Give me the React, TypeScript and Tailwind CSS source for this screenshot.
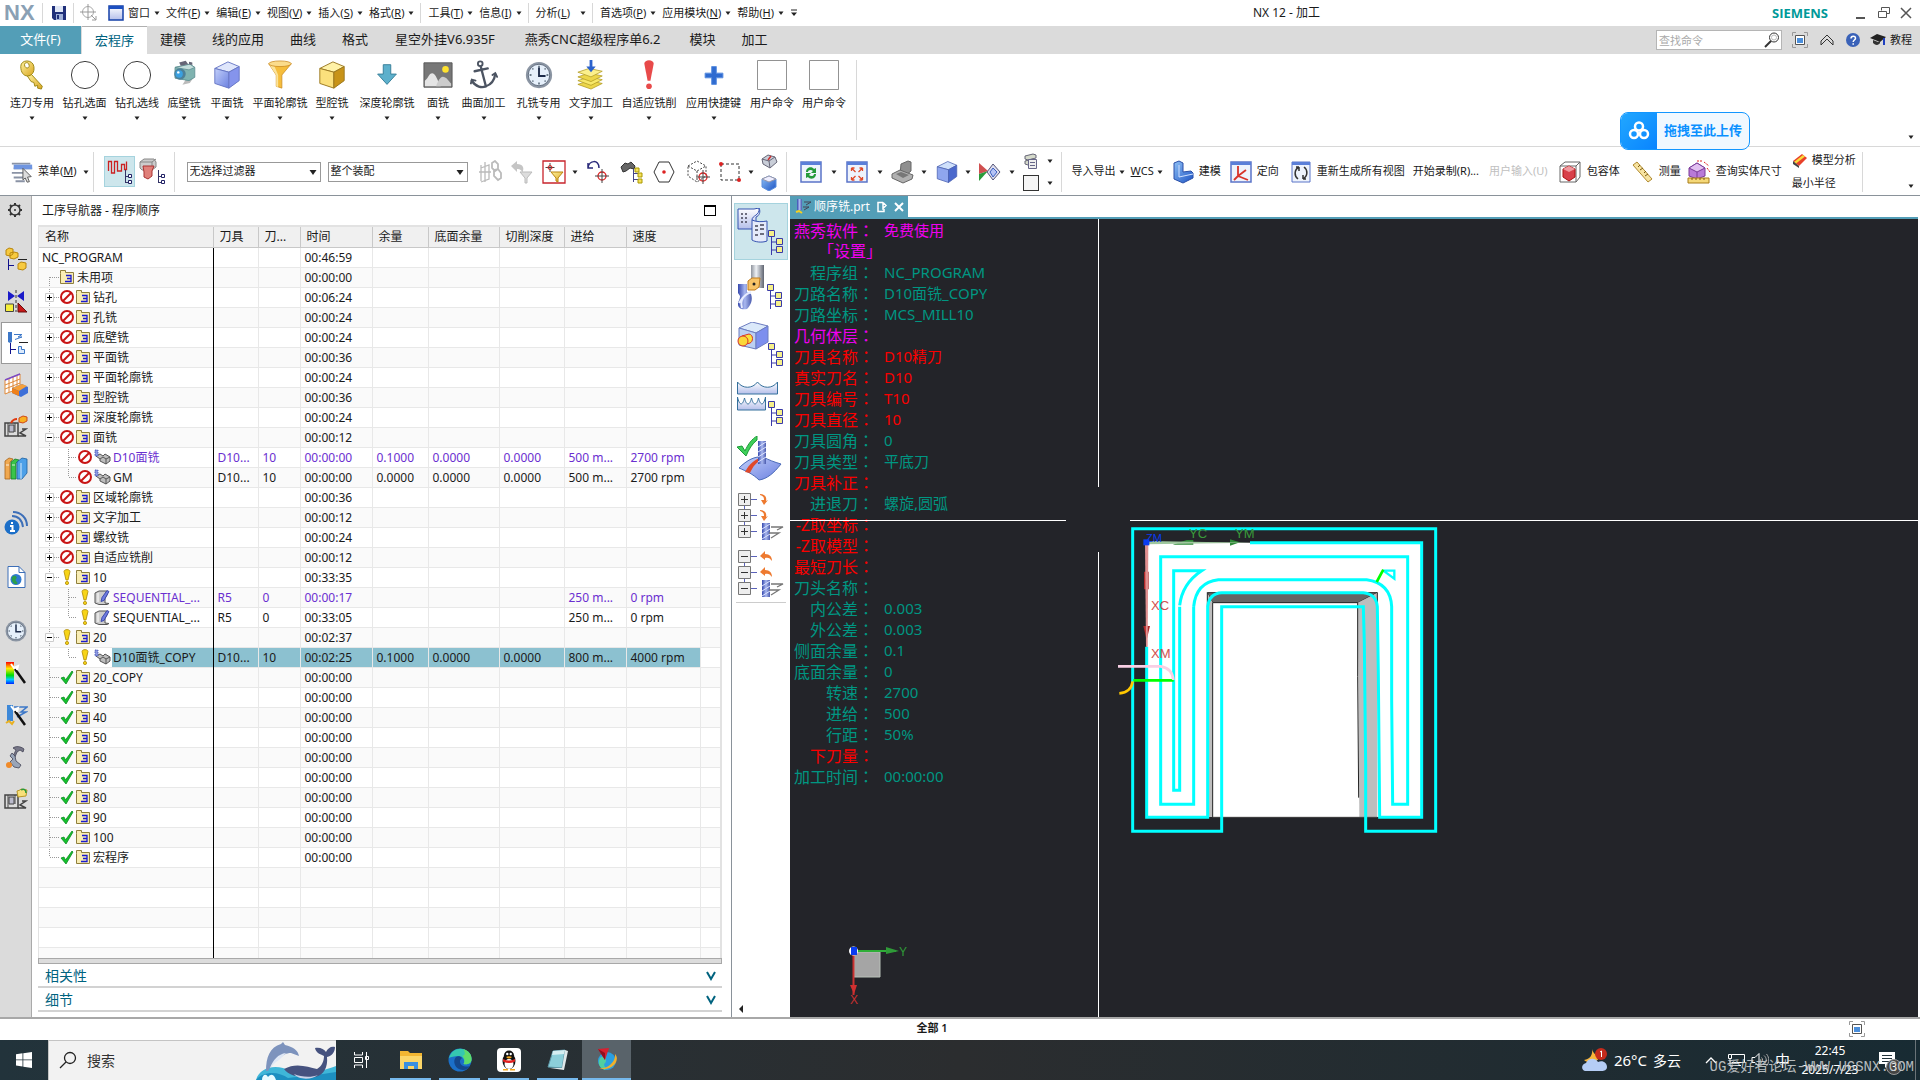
import { ReactNode } from 'react';

const FONT = "font-['Noto_Sans','Noto_Sans_CJK_SC',sans-serif]";

/* ---------- shared bits ---------- */

function Ico({ box = '0 0 24 24', className, children }: { box?: string; className: string; children: ReactNode }) {
  return (
    <svg viewBox={box} className={`shrink-0 ${className}`} fill="none" aria-hidden="true">
      {children}
    </svg>
  );
}

const Caret = ({ className = '' }: { className?: string }) => (
  <Ico box="0 0 6 4" className={`w-1.5 h-1 ${className}`}>
    <path d="M0.5 0.5h5L3 4z" fill="#222" />
  </Ico>
);

const Sep = ({ className }: { className: string }) => <span className={`w-px shrink-0 bg-[#d8d8d8] ${className}`} />;

// Gradients used by all icons on the page
const Gradients = () => (
  <svg className="absolute w-0 h-0" aria-hidden="true">
    <defs>
      <linearGradient id="gold" x1="0" y1="0" x2="1" y2="1">
        <stop offset="0" stopColor="#fff3a0" />
        <stop offset="1" stopColor="#d9a520" />
      </linearGradient>
      <linearGradient id="blue" x1="0" y1="0" x2="1" y2="1">
        <stop offset="0" stopColor="#c3d0fa" />
        <stop offset="1" stopColor="#6b80e0" />
      </linearGradient>
      <linearGradient id="deep" x1="0" y1="0" x2="1" y2="1">
        <stop offset="0" stopColor="#8ec0f5" />
        <stop offset="1" stopColor="#1c53c4" />
      </linearGradient>
      <linearGradient id="steel" x1="0" y1="0" x2="1" y2="0">
        <stop offset="0" stopColor="#8e939c" />
        <stop offset="0.4" stopColor="#eef1f5" />
        <stop offset="1" stopColor="#5f6470" />
      </linearGradient>
      <linearGradient id="cut" x1="0" y1="0" x2="1" y2="0">
        <stop offset="0" stopColor="#3548ae" />
        <stop offset="0.5" stopColor="#a9b8ef" />
        <stop offset="1" stopColor="#4a5aae" />
      </linearGradient>
      <linearGradient id="rainbow" x1="0" y1="0" x2="0" y2="1">
        <stop offset="0" stopColor="#f00" />
        <stop offset="0.3" stopColor="#fe0" />
        <stop offset="0.6" stopColor="#0d0" />
        <stop offset="0.8" stopColor="#0cf" />
        <stop offset="1" stopColor="#02f" />
      </linearGradient>
      <linearGradient id="panel" x1="0" y1="0" x2="0" y2="1">
        <stop offset="0" stopColor="#fff" />
        <stop offset="1" stopColor="#b5bfea" />
      </linearGradient>
    </defs>
  </svg>
);

const Cube = ({ top, left, right, line }: { top: string; left: string; right: string; line: string }) => (
  <g stroke={line} strokeWidth="1" strokeLinejoin="round">
    <path d="M3 9 17 2l12 5-11 6z" fill={top} />
    <path d="M3 9l15 4v17L3 25z" fill={left} />
    <path d="M29 7 18 13v17l11-8z" fill={right} />
  </g>
);

const Clock = () => (
  <g>
    <circle cx="16" cy="16" r="14" fill="#8b95a3" />
    <circle cx="16" cy="16" r="11.5" fill="#e6f0fb" stroke="#5f6b7c" />
    <path d="M16 6v2M16 24v2M6 16h2M24 16h2M9 9l1 1M23 9l-1 1M9 23l1-1M23 23l-1-1" stroke="#456" strokeWidth="1.5" />
    <path d="M16 8v9h7" stroke="#1d2b4a" strokeWidth="2" />
  </g>
);

/* ---------- title / menu bar ---------- */

const menuGroups: [string, string][][] = [
  [['窗口', ''], ['文件', 'F'], ['编辑', 'E'], ['视图', 'V'], ['插入', 'S'], ['格式', 'R']],
  [['工具', 'T'], ['信息', 'I']],
  [['分析', 'L']],
  [['首选项', 'P'], ['应用模块', 'N'], ['帮助', 'H']],
];

function Mnemonic({ text, letter }: { text: string; letter: string }) {
  return (
    <span>
      {text}
      {letter && <>(<u>{letter}</u>)</>}
    </span>
  );
}

function TitleBar() {
  return (
    <header className="flex items-center h-[26px] bg-white text-[11px] whitespace-nowrap relative">
      <span className="pl-1 w-[42px] text-[22px] leading-none font-bold text-[#8aa0b4] font-['Liberation_Sans',sans-serif]">NX</span>
      <Sep className="h-5" />
      <button className="ml-2 w-4" aria-label="保存">
        <Ico box="0 0 16 16" className="size-4">
          <path d="M1 1h14v14H3l-2-2z" fill="#20307a" />
          <path d="M4 1h8v6H4z" fill="#dfe6f5" />
          <path d="M5 9h7v6H5z" fill="#9fb0d8" />
          <path d="M6 10h2v4H6z" fill="#20307a" />
        </Ico>
      </button>
      <Sep className="h-5 ml-1.5" />
      <Ico box="0 0 18 18" className="size-[18px] ml-1.5">
        <circle cx="8" cy="8" r="5.500" stroke="#aaa" />
        <path d="M8 0v16M0 8h16M11 11l5 5M16 12v4h-4" stroke="#999" />
      </Ico>
      <Ico box="0 0 16 16" className="size-4 ml-2.5 mr-1">
        <path d="M1 1h14v14H1z" fill="url(#panel)" stroke="#1440a8" strokeWidth="1.500" />
        <path d="M1 1h14v3H1z" fill="#1c4fc0" />
      </Ico>
      {menuGroups.map((items, g) => (
        <div key={g} className="flex items-center">
          {g > 0 && <Sep className="h-5 mr-[7px]" />}
          {items.map(([text, letter]) => (
            <button key={text} className="flex items-center gap-1 pr-1.5">
              <Mnemonic text={text} letter={letter} />
              <Caret className={text === '分析' ? 'ml-1.5' : ''} />
            </button>
          ))}
        </div>
      ))}
      <Ico box="0 0 8 8" className="size-2">
        <path d="M1 1h6" stroke="#222" />
        <path d="M1 3.500h6L4 7z" fill="#222" />
      </Ico>
      <h1 className="ml-auto mr-[600px] text-[12px]">NX 12 - 加工</h1>
      <div className="absolute right-0 inset-y-0 flex items-center pr-2">
        <span className="mr-7 pt-0.5 font-bold text-[13px] text-[#009999] font-['Open_Sans',sans-serif]">SIEMENS</span>
        <button aria-label="最小化" className="mr-3">
          <Ico box="0 0 10 12" className="w-2.5 h-3"><path d="M0 11h9" stroke="#555" strokeWidth="2" /></Ico>
        </button>
        <button aria-label="还原" className="mr-2.5">
          <Ico box="0 0 12 12" className="size-3"><path d="M3.500 3.500v-3h8v6h-3M.5 4.500h8v6h-8z" stroke="#555" /></Ico>
        </button>
        <button aria-label="关闭">
          <Ico box="0 0 12 12" className="size-3"><path d="M1 1l10 10M11 1 1 11" stroke="#555" strokeWidth="1.500" /></Ico>
        </button>
      </div>
    </header>
  );
}

/* ---------- ribbon tabs ---------- */

const tabs: [string, string][] = [
  ['建模', 'px-[13px]'],
  ['线的应用', 'px-[13px]'],
  ['曲线', 'px-[13px]'],
  ['格式', 'px-[13px]'],
  ['星空外挂V6.935F', 'px-3.5'],
  ['燕秀CNC超级程序单6.2', 'px-4'],
  ['模块', 'px-[13px]'],
  ['加工', 'px-[13px]'],
];

const FullScreenIcon = ({ className }: { className: string }) => (
  <Ico box="0 0 16 16" className={className}>
    <path d="M.5 4V.5H4M12 .5h3.500V4M15.500 12v3.500H12M4 15.500H.5V12" stroke="#999" />
    <path d="M3.500 3.500h9v9h-9z" fill="#fff" stroke="#555" />
    <path d="M5 6h6v5H5z" fill="#4b8fdc" />
  </Ico>
);

function TabStrip() {
  return (
    <nav className="flex items-stretch h-7 bg-[#dbdbdb] text-[13px] whitespace-nowrap">
      <button className="w-[81px] bg-[#539eb7] text-white text-[13px]">文件(F)</button>
      <button className="px-[13px] ml-px bg-white border-t border-[#b0b0b0] text-[#00637f]">宏程序</button>
      {tabs.map(([label, pad]) => (
        <button key={label} className={pad}>{label}</button>
      ))}
      <div className="ml-auto flex items-center pr-2 text-[11px]">
        <div className="relative w-[126px] h-5">
          <input aria-label="查找命令" placeholder="查找命令" className="w-full h-full bg-white border border-[#b5b5b5] px-0.5 placeholder:text-[#aaa]" />
          <Ico box="0 0 16 16" className="size-4 absolute right-0.5 top-0.5">
            <circle cx="10" cy="5.500" r="4.500" stroke="#333" />
            <circle cx="10" cy="5.500" r="2.500" stroke="#bbb" />
            <path d="M7 9l-6 6" stroke="#333" strokeWidth="2" />
          </Ico>
        </div>
        <FullScreenIcon className="size-4 ml-2.5" />
        <Ico box="0 0 14 12" className="w-3.5 h-3 ml-3">
          <path d="M1 7l6-6 6 6M1 11l6-6 6 6M1 7v4M13 7v4" stroke="#333" />
        </Ico>
        <Ico box="0 0 14 14" className="size-3.5 ml-3">
          <circle cx="7" cy="7" r="7" fill="#3a62b8" />
          <path d="M5 5.500c0-3 4.500-3 4.500-.3C9.500 7 7.200 7 7.200 9M7.200 10.200v1.600" stroke="#fff" strokeWidth="1.500" />
        </Ico>
        <Ico box="0 0 16 12" className="w-4 h-3 ml-2.5">
          <path d="M0 4l7-4 9 3-6 5z" fill="#222" />
          <path d="M3 6v3c3 3 6 2 7 0V7L8 8z" fill="#333" />
          <path d="M14 4v7" stroke="#2040c0" strokeWidth="2" />
        </Ico>
        <span className="ml-1">教程</span>
      </div>
    </nav>
  );
}

/* ---------- ribbon ---------- */

const CircleIcon = <circle cx="16" cy="16" r="14.500" stroke="#333" />;
const BoxIcon = <path d="M.5 .5h31v31H.5z" stroke="#888" />;

const ribbon: { label: string; w: string; caret: boolean; icon: ReactNode }[] = [
  {
    label: '连刀专用', w: 'w-[52px]', caret: true,
    icon: (
      <g fill="url(#gold)" stroke="#9a8410" strokeWidth="1">
        <path d="M15 15l12 13-1 3-4-1v-3l-3 1-1-4-3-1-4-6z" />
        <path d="M4 7c0-8 13-8 14 0 1 7-3 10-7 10S4 13 4 7zm4-2c0 4 5 5 5 1s-5-4-5-1z" fillRule="evenodd" />
      </g>
    ),
  },
  { label: '钻孔选面', w: 'w-[53px]', caret: true, icon: CircleIcon },
  { label: '钻孔选线', w: 'w-[52px]', caret: true, icon: CircleIcon },
  {
    label: '底壁铣', w: 'w-[42px]', caret: true,
    icon: (
      <g transform="translate(2 0) scale(.88)">
        <path d="M14 30l9-2 6-9-10 3z" fill="#bbb" />
        <path d="M5 9l18-4 6 4v12l-7 4-17-3z" fill="#7fb3b0" stroke="#5e8f92" />
        <path d="M5 9l18-4 6 4-7 3z" fill="#c4dedc" stroke="#5e8f92" />
        <path d="M10 3l8-2 3 4-9 2zM22 2l4 1v3l-4-1z" fill="#667" />
        <circle cx="11" cy="17" r="7" fill="#4d8098" />
        <circle cx="10" cy="17" r="4.500" fill="#3aa0e0" />
        <circle cx="9" cy="15" r="1.500" fill="#fff" />
      </g>
    ),
  },
  { label: '平面铣', w: 'w-[44px]', caret: true, icon: <Cube top="#dfe6fb" left="url(#blue)" right="#8594ec" line="#6676c4" /> },
  {
    label: '平面轮廓铣', w: 'w-[62px]', caret: true,
    icon: (
      <g stroke="#c98a20" strokeWidth=".8">
        <path d="M4 4l8 12v12l6 2V16L28 4z" fill="#f5bd3c" />
        <path d="M4 4l8 12v12l2 1V16L9 4z" fill="#fbe39a" stroke="none" />
        <ellipse cx="16" cy="4" rx="12" ry="3" fill="#fbdc8c" />
      </g>
    ),
  },
  { label: '型腔铣', w: 'w-[42px]', caret: true, icon: <Cube top="#fff2a8" left="#fbe07c" right="#c89318" line="#9a7720" /> },
  {
    label: '深度轮廓铣', w: 'w-[68px]', caret: true,
    icon: <path d="M12 5h8v10h6L16 26 6 15h6z" fill="#5db0cc" stroke="#357e98" />,
  },
  {
    label: '面铣', w: 'w-[34px]', caret: true,
    icon: (
      <g>
        <path d="M1 3h30v26H1z" fill="#777" stroke="#555" />
        <path d="M2 22c4-3 4-8 8-8 4 1 5 7 9 14H2z" fill="#e5e5e5" />
        <path d="M14 28c2-6 5-11 8-10 3 0 5 4 8 7v3z" fill="#ccc" />
        <circle cx="24" cy="10" r="3.500" fill="#ffe22e" />
      </g>
    ),
  },
  {
    label: '曲面加工', w: 'w-[57px]', caret: true,
    icon: (
      <g stroke="#4c5462" strokeWidth="2.500" strokeLinecap="round">
        <circle cx="12" cy="4" r="2.500" strokeWidth="2" />
        <path d="M12.500 7 18 28M6 12l14-3" />
        <path d="M3 22c4 7 11 8 15 6 6-2 9-6 10-13" />
        <path d="M2 25l1-4 4 1M25 16l3-2 2 4" strokeWidth="2" />
      </g>
    ),
  },
  { label: '孔铣专用', w: 'w-[53px]', caret: true, icon: <Clock /> },
  {
    label: '文字加工', w: 'w-[52px]', caret: true,
    icon: (
      <g stroke="#b09a20" strokeWidth=".8">
        <path d="M2 26l12-4 14 3-12 6z" fill="#ecd64a" />
        <path d="M2 22l12-4 14 3-12 6z" fill="#f7e86a" />
        <path d="M2 18l12-4 14 3-12 6z" fill="#ecd64a" />
        <path d="M2 13l12-4 14 3-12 6z" fill="#fbf08c" />
        <path d="M14.500 0h3v7h3.500l-5 6-5-6h3.500z" fill="#2c62cc" stroke="none" />
      </g>
    ),
  },
  {
    label: '自适应铣削', w: 'w-[64px]', caret: true,
    icon: (
      <g fill="#e84a4a">
        <path d="M11 4c0-5 10-5 10 0l-3.500 18h-3z" />
        <circle cx="16" cy="28" r="3" />
      </g>
    ),
  },
  { label: '应用快捷键', w: 'w-[65px]', caret: true, icon: <path d="M13.500 7h5v7h7v5h-7v7h-5v-7h-7v-5h7z" fill="#2f6bd0" stroke="#5a8ee0" /> },
  { label: '用户命令', w: 'w-[52px]', caret: false, icon: BoxIcon },
  { label: '用户命令', w: 'w-[52px]', caret: false, icon: BoxIcon },
];

function Ribbon() {
  return (
    <section className="relative flex h-[93px] bg-white border-b border-[#d8d8d8] text-[11px] whitespace-nowrap pl-1.5">
      {ribbon.map((b, i) => (
        <button key={i} className={`flex flex-col items-center pt-1.5 shrink-0 ${b.w}`}>
          <Ico box="0 0 32 32" className="size-[30px]">{b.icon}</Ico>
          <span className="mt-1 h-[18px] leading-[18px]">{b.label}</span>
          {b.caret && <Caret className="mt-1" />}
        </button>
      ))}
      <Sep className="my-1.5 ml-1.5" />
      <Caret className="ml-auto mr-1.5 mt-[81px]" />
      <button className="absolute right-[170px] top-[58px] flex items-center h-[38px] w-[130px] rounded-lg border border-[#1296ff] bg-[#f0f8ff] overflow-hidden z-10">
        <span className="grid place-items-center w-9 h-full bg-gradient-to-br from-[#22a7ff] to-[#0a84ff]">
          <Ico className="size-6">
            <g stroke="#fff" strokeWidth="2.500">
              <circle cx="12" cy="7.500" r="4" />
              <circle cx="7" cy="15" r="4" />
              <circle cx="17" cy="15" r="4" />
            </g>
          </Ico>
        </span>
        <span className="flex-1 text-center text-[13px] font-bold text-[#0a90ff]">拖拽至此上传</span>
      </button>
    </section>
  );
}

/* ---------- selection toolbar ---------- */

const FilterSelect = ({ label, w }: { label: string; w: string }) => (
  <div className={`relative shrink-0 ${w}`}>
    <select aria-label={label} className="w-full h-5 appearance-none border border-[#999] bg-white pl-0.5 text-[11px]">
      <option>{label}</option>
    </select>
    <Ico box="0 0 8 5" className="w-2 h-[5px] absolute right-1 top-2"><path d="M.5 0h7L4 5z" fill="#222" /></Ico>
  </div>
);

const Target = ({ x, y }: { x: number; y: number }) => (
  <g stroke="#d22">
    <circle cx={x} cy={y} r="4" strokeWidth="1.300" />
    <path d={`M${x - 7} ${y}h14M${x} ${y - 7}v14`} stroke="#444" />
  </g>
);

const FrameBox = () => (
  <>
    <path d="M2 2h20v20H2z" fill="#eef3fc" stroke="#5b74c8" strokeWidth="1.500" />
    <path d="M2 2h20v3H2z" fill="#5b7fd8" />
  </>
);

const SmallTree = () => (
  <g>
    <path d="M20.500 12v13M20 18.500h4M20 24.500h4" stroke="#336" />
    <path d="M23.500 16.500h3v3h-3zM23.500 22.500h3v3h-3z" fill="#fff" stroke="#226" />
  </g>
);

function Toolbar() {
  return (
    <section className="flex items-center h-12 pt-px bg-white text-[11px] whitespace-nowrap">
      <button className="flex items-center pl-2.5">
        <Ico box="0 0 26 24" className="w-6 h-6">
          <path d="M2 3h20M4 8h20M2 13h16M4 18h14M6 22h10" stroke="#8a93a5" strokeWidth="2" />
          <path d="M4 4h20v5H4z" fill="#6f95e0" />
          <path d="M14 8l9 9-4 .5 2 5-2.500.5-2-4.500-2.500 2z" fill="#ddd" stroke="#555" />
        </Ico>
        <span className="ml-1 mr-1.5"><Mnemonic text="菜单" letter="M" /></span>
        <Caret />
      </button>
      <Sep className="h-10 ml-1" />
      <button className="ml-2.5 grid place-items-center w-[31px] h-[31px] bg-[#cde6ec] border border-[#a5d3de]" aria-label="刀轨">
        <Ico box="0 0 28 28" className="size-7">
          <path d="M3.500 13V3.500h3V15h3V3.500h3V13h4V6.500h3v5h2v-8" stroke="#c22" strokeWidth="1.300" />
          <SmallTree />
        </Ico>
      </button>
      <Ico box="0 0 28 28" className="size-7 ml-[3px]">
        <path d="M2 4l4-3h10l2 3v5l-4 3H4l-2-2z" fill="#ccc" stroke="#888" />
        <path d="M2 4h12l4-3M14 4v8" stroke="#888" />
        <path d="M5 8h11l-2 5v5l-4 3-4-2v-5z" fill="#e0807a" stroke="#a33" />
        <SmallTree />
      </Ico>
      <Sep className="h-10 ml-2 mr-3" />
      <FilterSelect label="无选择过滤器" w="w-[134px]" />
      <span className="w-[7px]" />
      <FilterSelect label="整个装配" w="w-[140px]" />

      <Ico className="size-6 ml-2.5">
        <path d="M3 5v16M3 8l8-3v14l-8 3M7 2v20M1 12h12" stroke="#bbb" strokeWidth="1.300" />
        <path d="M14 3l3-2 3 3v5l-3 2-3-3zM16 10l4-1 3 4v5l-3 2-4-4z" stroke="#bbb" strokeWidth="1.800" />
      </Ico>
      <Ico className="size-6 ml-2">
        <path d="M1 6l6-5v3c6 0 8 4 5 9 0-3-2-4-5-4v3z" fill="#c5c5c5" />
        <path d="M10 12h12l-5 6v5h-2v-5z" fill="#ddd" stroke="#bbb" />
      </Ico>
      <Ico className="size-6 ml-2">
        <path d="M1 1h22v22H1z" stroke="#c8242c" strokeWidth="1.300" />
        <path d="M8 3v9M3.500 7.500h9" stroke="#444" />
        <circle cx="8" cy="7.500" r="2" stroke="#d22" />
        <path d="M9 12h12l-5 6v4l-2-1v-3z" fill="url(#gold)" stroke="#b98511" />
      </Ico>
      <Caret className="ml-1.5" />
      <Ico className="size-6 ml-2">
        <path d="M2 3v5h5M2 8c1-8 11-9 11 0" stroke="#2a2a7a" strokeWidth="1.500" />
        <Target x={16} y={16} />
      </Ico>
      <Ico className="size-6 ml-2.5">
        <path d="M1 7l4-4 3 1 3-2 4 4-1 3-4-1-4 3-3 1z" fill="#666" stroke="#333" />
        <path d="M13.500 9v13M13 13.500h5M13 19.500h5" stroke="#448" />
        <path d="M15 8h4v4h-4zM18 13h4v4h-4zM18 19h4v4h-4z" fill="#f5e05a" stroke="#a90" />
      </Ico>
      <Ico className="size-6 ml-2">
        <path d="M7 2h10l5 10-5 10H7L2 12z" stroke="#333" />
        <circle cx="12" cy="12" r="1.800" fill="#d22" />
      </Ico>
      <Ico className="size-6 ml-2.5">
        <path d="M2 6l9-5 9 5v10l-9 6-9-6zM2 6l9 5 9-5M11 11v11" stroke="#444" strokeDasharray="2 1.500" />
        <Target x={17} y={17} />
      </Ico>
      <Ico className="size-6 ml-2">
        <path d="M3 4h18v16H3z" stroke="#333" strokeDasharray="3 2" />
        <circle cx="3" cy="4" r="2" fill="#d22" />
        <circle cx="21" cy="20" r="2" fill="#d22" />
      </Ico>
      <Caret className="ml-1.5" />
      <div className="flex flex-col gap-1.5 ml-1.5">
        <Ico box="0 0 18 16" className="w-[18px] h-4">
          <path d="M2 6l6-4 7 2 2 5-7 6-7-4z" fill="#c9ced8" stroke="#667" />
          <path d="M2 6l7 2 6-4M9 8l1 7" stroke="#667" />
          <path d="M8 7l3-4" stroke="#c33" strokeWidth="1.500" />
        </Ico>
        <Ico box="0 0 18 16" className="w-[18px] h-4">
          <path d="M2 4l7-3 7 3v8l-7 4-7-4z" fill="url(#deep)" stroke="#5b8edc" />
          <path d="M2 4l7-3 7 3-7 3z" fill="#eef" stroke="#99a" />
        </Ico>
      </div>
      <Sep className="h-10 ml-2 mr-3" />

      <Ico className="size-6">
        <FrameBox />
        <path d="M7 12c0-5 6-6 8-3l2-1v5h-5l2-2c-2-2-5-1-5 1zM17 14c0 5-6 6-8 3l-2 1v-5h5l-2 2c2 2 5 1 5-1z" fill="#249a3a" />
      </Ico>
      <Caret className="ml-2" />
      <Ico className="size-6 ml-2">
        <FrameBox />
        <path d="M6.500 8h3M6.500 8v3M6.500 8l4 4M17.500 8h-3M17.500 8v3M17.500 8l-4 4M6.500 20h3M6.500 20v-3M6.500 20l4-4M17.500 20h-3M17.500 20v-3M17.500 20l-4-4" stroke="#e04a2a" strokeWidth="1.300" />
      </Ico>
      <Caret className="ml-2" />
      <Ico className="size-6 ml-2">
        <path d="M10 4l7-3 3 1v9l-6 5-5-1z" fill="#8f8f8f" stroke="#666" />
        <path d="M1 14l8-4 13 5-1 4-9 4-11-5z" fill="#b0b0b0" stroke="#666" />
        <path d="M5 14l5-2 8 3-6 3z" fill="#777" />
      </Ico>
      <Caret className="ml-1.5" />
      <Ico box="0 0 32 32" className="size-6 ml-2"><Cube top="#cfe0fb" left="#8fa6ee" right="#4a68cc" line="#4a60b0" /></Ico>
      <Caret className="ml-1.5" />
      <Ico className="size-6 ml-1.5">
        <path d="M2 3l9 8-9 3z" fill="#d05050" />
        <path d="M2 14l9-3-9 10z" fill="#2a9a3a" />
        <path d="M16 4l7 8-7 8-6-8z" fill="#dde" stroke="#557" />
        <path d="M16 8l4 4-4 5-3-5z" fill="#b5c3f5" stroke="#3a5fc0" />
      </Ico>
      <Caret className="ml-2" />
      <div className="flex flex-col gap-1.5 ml-2">
        <div className="flex items-center gap-2">
          <Ico box="0 0 16 16" className="size-4">
            <path d="M2 3l8-2 3 1v3l-8 2-3-1zM2 8l8-2 3 1v3l-8 2-3-1z" fill="#d5dacb" stroke="#667" />
            <path d="M5.500 6.500h8v9h-8z" fill="#eee" stroke="#668" />
            <path d="M7 9.500h5M7 12.500h5" stroke="#668" />
          </Ico>
          <Caret />
        </div>
        <div className="flex items-center gap-2">
          <span className="w-4 h-4 border border-[#333] bg-[#f5f5f5]" />
          <Caret />
        </div>
      </div>
      <Sep className="h-10 ml-2 mr-2.5" />

      <button className="flex items-center gap-[3px]">导入导出<Caret /></button>
      <button className="flex items-center gap-[3px] ml-1.5"><span><u>W</u>CS</span><Caret /></button>
      <button className="flex items-center gap-1 ml-2">
        <Ico className="size-6">
          <path d="M3 3l5-2 4 2v9l8-1 2 2v5l-10 5-9-4z" fill="url(#deep)" stroke="#2a4fa8" />
          <path d="M8 5v12l14-3" stroke="#cfe0ff" />
        </Ico>
        建模
      </button>
      <button className="flex items-center gap-1 ml-2">
        <Ico className="size-6">
          <FrameBox />
          <path d="M9 6v10l10 4M9 16l8-6M9 16l-4 4" stroke="#d8332a" strokeWidth="1.800" />
        </Ico>
        定向
      </button>
      <button className="flex items-center gap-1 ml-2.5">
        <Ico className="size-6">
          <path d="M3 2h18v20H3z" fill="#eef3fc" stroke="#5b74c8" />
          <path d="M3 2h18v3H3z" fill="#5b7fd8" />
          <path d="M10 7c-5 3-5 9-1 12M14 19c5-3 5-9 1-12M10 7H7M10 7v4M14 19h3M14 19v-4" stroke="#333" strokeWidth="1.500" />
        </Ico>
        重新生成所有视图
      </button>
      <button className="ml-2">开始录制(R)...</button>
      <button className="ml-2.5 text-[#c0c0c0]" disabled>用户输入(U)</button>
      <button className="flex items-center gap-[5px] ml-2.5">
        <Ico className="size-6">
          <path d="M2 6l5-4h15v15l-4 5H2zM2 6h16v16M18 6l4-4" stroke="#666" />
          <path d="M5 9l6-3 6 3v8l-6 4-6-4z" fill="#d8404a" stroke="#a11" />
          <path d="M5 9l6-3 6 3-6 3z" fill="#f09aa0" />
        </Ico>
        包容体
      </button>
      <button className="flex items-center gap-[5px] ml-2.5">
        <Ico className="size-6">
          <path d="M3 5l4-3 15 17-4 3z" fill="#f7e3a0" stroke="#b08a30" />
          <path d="M10 5l-2 2M13 8l-3 2M16 11l-2 2M18 14l-3 2" stroke="#7a5a10" />
        </Ico>
        测量
      </button>
      <button className="flex items-center gap-[5px] ml-1.5">
        <Ico className="size-6">
          <path d="M2 8l8-5 8 5v8l-8 3-8-3z" fill="#b87ad8" stroke="#7a3a98" />
          <path d="M2 8l8-5 8 5-8 4zM10 12v7" fill="#e2c0f0" stroke="#7a3a98" />
          <path d="M17 2l5 4M20 8l3 4M10 1h6" stroke="#d22" strokeDasharray="2 1" />
          <path d="M1 18h21v5H1z" fill="#f5d878" stroke="#a77c18" />
          <path d="M5 18v2M9 18v2M13 18v2M17 18v2" stroke="#7a5a10" />
        </Ico>
        查询实体尺寸
      </button>
      <div className="flex flex-col items-start gap-1.5 ml-2.5">
        <button className="flex items-center gap-1">
          <Ico box="0 0 16 16" className="size-4">
            <path d="M1 9l9-7 5 4-8 8z" fill="#e8402a" />
            <path d="M2 10l9-7 2 1.500-9 7z" fill="#f9d93a" />
            <path d="M1 9l6 5v2l-6-4z" fill="#444" />
          </Ico>
          模型分析
        </button>
        <button>最小半径</button>
      </div>
      <Sep className="h-10 ml-1.5" />
      <Caret className="ml-auto mr-1.5 mt-7" />
    </section>
  );
}

/* ---------- resource bar on the far left ---------- */

const Wand = () => (
  <g>
    <path d="M11 8l10 14" stroke="#111" strokeWidth="2.500" />
    <path d="M7 3l3 4 4-2-1 4" fill="#fff" stroke="#fff" strokeWidth="2" />
  </g>
);

const MachineBody = () => (
  <g stroke="#444">
    <path d="M1 8h13v13H1z" fill="#ddd" strokeWidth="1.500" />
    <path d="M4 8v13M11 8v9" />
    <path d="M5 10h5v7H5z" fill="#bbc" />
    <path d="M14 21h8l-6-3 6-4h-4" strokeWidth="1.500" />
  </g>
);

const resourceIcons: { icon: ReactNode; gap?: boolean; active?: boolean }[] = [
  {
    icon: (
      <g>
        <path d="M2 3l3-2 4 1v5l-3 2-4-1zM6 6l4-1 4 1v4l-4 2-4-1zM14 17l3-2 5 1v5l-3 2-5-1z" fill="#f7ca40" stroke="#b8860c" />
        <path d="M4.500 12v11M5 18.500h5" stroke="#11118c" />
        <path d="M14 12.500h9" stroke="#222" />
      </g>
    ),
  },
  {
    icon: (
      <g>
        <path d="M4 2l7 5-7 5zM20 2l-7 5 7 5z" fill="#1a1ac8" />
        <path d="M12 1v22" stroke="#333" strokeDasharray="3 2" />
        <path d="M1.500 15h8v7.500h-8z" fill="#f6ef3a" stroke="#444" />
        <path d="M14 14l9 9h-9z" fill="#c81818" stroke="#611" />
      </g>
    ),
  },
  {
    active: true,
    icon: (
      <g>
        <path d="M3 1h4v10l-2 1-2-1z" fill="#3d78c8" />
        <path d="M9 3.500h8l-4 2.500h4l-7 2.500" stroke="#3d78c8" />
        <path d="M5.500 12v11M5 18.500h6" stroke="#11118c" />
        <path d="M14 11.500h9" stroke="#222" />
        <path d="M13.500 15.500h3v3h3v4h-6z" fill="#dceafc" stroke="#3d78c8" />
      </g>
    ),
  },
  {
    icon: (
      <g>
        <path d="M1 7l15-6v14L1 21zM5 5v14M9 4v13M13 3v13M1 12l15-6M1 16l15-6" stroke="#e08a3a" fill="#fff" />
        <path d="M1 7l15-6" stroke="#7a4ac8" strokeWidth="1.500" />
        <path d="M8 15l10-4 6 3v6l-7 4-9-4z" fill="#3d6fd8" />
        <path d="M8 15l10-4 5 2-8 5z" fill="#f5a03a" />
        <path d="M8 15l7 3v5l-7-3z" fill="#f08018" />
      </g>
    ),
  },
  {
    icon: (
      <g>
        <MachineBody />
        <path d="M15 3l4-2 4 1v4l-4 2-4-1z" fill="#f8b020" stroke="#d04818" />
        <path d="M13 4c-4 0-5 2-6 4" stroke="#e03a10" strokeWidth="2" />
      </g>
    ),
  },
  {
    icon: (
      <g strokeWidth=".8">
        <path d="M1 4l4-3 4 1-3 3v17H1z" fill="#f0a850" stroke="#a8661c" />
        <path d="M7 5l4-3 4 1-3 3v16H7z" fill="#3ac44a" stroke="#147a28" />
        <path d="M13 5l5-4 5 1v14l-5 6h-5z" fill="#4da0e8" stroke="#1c60a0" />
        <path d="M17 6v16M2 8h3M8 8h3" stroke="#fff" />
      </g>
    ),
  },
  {
    gap: true,
    icon: (
      <g>
        <circle cx="8" cy="16" r="7.500" fill="#1c6fc8" />
        <path d="M8 11v2M6 15h2.500v5M6 20h5" stroke="#fff" strokeWidth="2" />
        <path d="M8 5c6 0 10 4 11 11M9 1c8 0 14 6 14 14" stroke="#3d6fb8" strokeWidth="2" />
      </g>
    ),
  },
  {
    gap: true,
    icon: (
      <g>
        <path d="M4 1.500h11l6 6v15H4z" fill="#fff" stroke="#3d6fb8" />
        <path d="M15 1.500v6h6" stroke="#3d6fb8" />
        <circle cx="12" cy="14.500" r="5.500" fill="#2f7ad0" />
        <path d="M8 12c3-3 6 0 4 2s3 3 1 5c-4 1-6-4-5-7z" fill="#2ca04a" />
      </g>
    ),
  },
  { gap: true, icon: <g transform="scale(.75)"><Clock /></g> },
  { icon: <g><path d="M2 1h8v22H2z" fill="url(#rainbow)" /><Wand /></g> },
  {
    icon: (
      <g>
        <path d="M3 2h6v16H3z" fill="#3d88d8" />
        <path d="M10 4h13l-6 5h5l-9 5" stroke="#3d78c8" strokeWidth="1.500" />
        <path d="M2 20l3-2 3 3 2-3" stroke="#e8b020" strokeWidth="2" />
        <Wand />
      </g>
    ),
  },
  {
    icon: (
      <g>
        <path d="M9 3c3-2 7-2 11 1l-1 3-3-2-3 2-2 5-2-1 3-6z" fill="#778" stroke="#445" strokeWidth=".8" />
        <path d="M8 8l3 3 1 5 5 4-2 3-5-1-4-5 3-3-3-3z" fill="#99a5b8" stroke="#445" strokeWidth=".8" />
        <circle cx="5" cy="20" r="3" fill="#f08a28" />
      </g>
    ),
  },
  {
    icon: (
      <g>
        <MachineBody />
        <path d="M13 4l3-1 1-1 6 1-1 6-8 1z" fill="#f8e07a" stroke="#b99828" />
        <path d="M17 3c3-2 5 0 5 3" stroke="#2a9a3a" strokeWidth="1.500" />
      </g>
    ),
  },
];

function ResourceBar() {
  return (
    <aside className="w-8 shrink-0 bg-[#dbdbdb] border-r border-[#aaa] flex flex-col items-end">
      <div className="h-[42px] w-8 flex justify-center pt-1.5">
        <Ico box="0 0 16 16" className="size-4">
          <circle cx="8" cy="8" r="5" stroke="#333" strokeWidth="1.500" />
          <path d="M8 1v2M8 13v2M1 8h2M13 8h2M3 3l1.500 1.500M13 3l-1.500 1.500M3 13l1.500-1.500M13 13l-1.500-1.500" stroke="#333" strokeWidth="2" />
          <circle cx="8" cy="8" r="1" fill="#333" />
        </Ico>
      </div>
      {resourceIcons.map((r, i) => (
        <button
          key={i}
          className={`h-[42px] w-[30px] grid place-items-center ${r.gap ? 'mt-3' : ''} ${
            r.active ? 'bg-white border border-r-0 border-[#999]' : ''
          }`}
        >
          <Ico className="size-6">{r.icon}</Ico>
        </button>
      ))}
    </aside>
  );
}

/* ---------- operation navigator ---------- */

type Status = 'ban' | 'warn' | 'ok' | 'none';

interface Row {
  name: string;
  level: 0 | 1 | 2;
  status: Status;
  icon?: 'mill' | 'seq';
  expand?: '+' | '-';
  last?: boolean;
  cells: string[]; // tool, no., time, stock, floor stock, depth, feed, speed
  tone?: 'purple';
  selected?: boolean;
}

const t = (time: string) => ['', '', time, '', '', '', '', ''];
const group = (name: string, time: string, expand: '+' | '-' = '+', status: Status = 'ban'): Row => ({
  name, level: 1, status, expand, cells: t(time),
});
const done = (name: string, last = false): Row => ({ name, level: 1, status: 'ok', last, cells: t('00:00:00') });

const rows: Row[] = [
  { name: 'NC_PROGRAM', level: 0, status: 'none', cells: t('00:46:59') },
  { name: '未用项', level: 1, status: 'none', cells: t('00:00:00') },
  group('钻孔', '00:06:24'),
  group('孔铣', '00:00:24'),
  group('底壁铣', '00:00:24'),
  group('平面铣', '00:00:36'),
  group('平面轮廓铣', '00:00:24'),
  group('型腔铣', '00:00:36'),
  group('深度轮廓铣', '00:00:24'),
  group('面铣', '00:00:12', '-'),
  { name: 'D10面铣', level: 2, status: 'ban', icon: 'mill', tone: 'purple', cells: ['D10...', '10', '00:00:00', '0.1000', '0.0000', '0.0000', '500 m...', '2700 rpm'] },
  { name: 'GM', level: 2, status: 'ban', icon: 'mill', last: true, cells: ['D10...', '10', '00:00:00', '0.0000', '0.0000', '0.0000', '500 m...', '2700 rpm'] },
  group('区域轮廓铣', '00:00:36'),
  group('文字加工', '00:00:12'),
  group('螺纹铣', '00:00:24'),
  group('自适应铣削', '00:00:12'),
  group('10', '00:33:35', '-', 'warn'),
  { name: 'SEQUENTIAL_...', level: 2, status: 'warn', icon: 'seq', tone: 'purple', cells: ['R5', '0', '00:00:17', '', '', '', '250 m...', '0 rpm'] },
  { name: 'SEQUENTIAL_...', level: 2, status: 'warn', icon: 'seq', last: true, cells: ['R5', '0', '00:33:05', '', '', '', '250 m...', '0 rpm'] },
  group('20', '00:02:37', '-', 'warn'),
  { name: 'D10面铣_COPY', level: 2, status: 'warn', icon: 'mill', last: true, selected: true, cells: ['D10...', '10', '00:02:25', '0.1000', '0.0000', '0.0000', '800 m...', '4000 rpm'] },
  done('20_COPY'),
  done('30'),
  done('40'),
  done('50'),
  done('60'),
  done('70'),
  done('80'),
  done('90'),
  done('100'),
  done('宏程序', true),
];

const columns: [string, string][] = [
  ['名称', 'w-[174px]'],
  ['刀具', 'w-[45px]'],
  ['刀...', 'w-[42px]'],
  ['时间', 'w-[72px]'],
  ['余量', 'w-[56px]'],
  ['底面余量', 'w-[71px]'],
  ['切削深度', 'w-[65px]'],
  ['进给', 'w-[62px]'],
  ['速度', 'w-[74px]'],
  ['', ''],
];

function StatusIcon({ status }: { status: Status }) {
  if (status === 'none') return null;
  return (
    <Ico box="0 0 16 16" className="size-4">
      {status === 'ban' && (
        <g stroke="#c81414" strokeWidth="2">
          <circle cx="7" cy="8" r="6" fill="#fff" />
          <path d="M3 12l8-8" />
        </g>
      )}
      {status === 'warn' && (
        <g fill="#f7d417" stroke="#b08a00" strokeWidth=".8">
          <path d="M4 2.500c0-2.500 6-2.500 6 0L8 11H6z" />
          <circle cx="7" cy="14" r="1.600" />
        </g>
      )}
      {status === 'ok' && <path d="M1 9l3-1 1.500 3L12 2l1 1-7 12z" fill="#12c22c" stroke="#0f8a22" strokeWidth=".8" />}
    </Ico>
  );
}

const FolderIcon = () => (
  <Ico box="0 0 16 16" className="size-4">
    <path d="M.5 4.500v-3h5v2h8v11H.5z" fill="#f9edb4" stroke="#8f7f3c" />
    <path d="M6 6.500h5v3H7M11 9.500v3H5" stroke="#1a1ad0" strokeWidth="1.300" />
  </Ico>
);

const OpIcon = ({ kind }: { kind: 'mill' | 'seq' }) => (
  <Ico box="0 0 18 16" className="w-[18px] h-4">
    {kind === 'mill' ? (
      <g>
        <path d="M2 7l4 3v2l6 3 4-3V8l-5-3-2 2-3-2z" fill="#bdbdbd" stroke="#555" />
        <path d="M6 10l3-2 3 2 4-2M12 10v5" stroke="#555" />
        <path d="M1 1h3v6H1z" fill="#8e9ae0" stroke="#3a4ab0" strokeWidth=".8" strokeDasharray="1.500 1" />
      </g>
    ) : (
      <g>
        <path d="M1 4l4-2h8v4l-2 3v5l4 .5-2 1H5L1 14z" fill="#ccc" stroke="#555" />
        <path d="M13 1.500l2 1-5 9-3 1 1-4z" fill="#6f7ce0" stroke="#2a38a0" strokeWidth=".8" />
        <path d="M4 4v9" stroke="#fff" />
      </g>
    )}
  </Ico>
);

const dots = { stroke: '#999', strokeDasharray: '1 1' };

// Connector lines in front of a node; the first gutter belongs to the root level
function Gutter({ row }: { row: Row }) {
  if (row.level === 0) return <span className="w-px" />;
  const deep = row.level === 2;
  const lastHere = row.last && !deep;
  const first = row.name === '未用项';
  return (
    <>
      <Ico box="0 0 20 20" className="size-5">
        <path d={`M9.500 ${first ? 10 : 0}V${lastHere ? 10 : 20}`} {...dots} />
        {!deep && <path d="M10 10.500h9" {...dots} />}
        {row.expand && (
          <>
            <path d="M5.500 6.500h8v8h-8z" fill="#fff" stroke="#ccc" />
            <path d={row.expand === '+' ? 'M7 10.500h5M9.500 8v5' : 'M7 10.500h5'} stroke="#000" />
          </>
        )}
      </Ico>
      {deep && (
        <Ico box="0 0 18 20" className="w-[18px] h-5">
          <path d={`M8.500 0V${row.last ? 10 : 20}M9 10.500h8`} {...dots} />
        </Ico>
      )}
    </>
  );
}

function NameCell({ row }: { row: Row }) {
  return (
    <div className="flex items-center h-[19px] overflow-hidden pl-px">
      <Gutter row={row} />
      <StatusIcon status={row.status} />
      {row.icon ? <OpIcon kind={row.icon} /> : row.level > 0 && <FolderIcon />}
      <span className={`flex-1 h-full pl-px leading-[19px] ${row.selected ? 'bg-[#8cc1d0]' : ''}`}>{row.name}</span>
    </div>
  );
}

function Navigator() {
  return (
    <section className="w-[700px] shrink-0 flex flex-col bg-white border-r border-[#8a929a] pl-1.5 pr-[9px] pb-[5px]">
      <div className="flex items-center justify-between h-[29px] pl-1 pr-1.5">
        <h2 className="text-[12px]">工序导航器 - 程序顺序</h2>
        <button aria-label="最大化" className="w-3 h-[11px] border border-t-2 border-black" />
      </div>
      <div className="flex-1 min-h-0 overflow-hidden border-2 border-b-0 border-[#e2e2e2] border-l">
        <table className="table-fixed w-full border-collapse text-[12px] whitespace-nowrap">
          <thead>
            <tr className="h-5 bg-[#f0f0f0] text-left">
              {columns.map(([label, w], i) => (
                <th key={i} className={`${w} p-0 pl-1.5 font-normal leading-[19px] border-r border-b border-[#c8c8c8] last:border-r-0`}>
                  {label}
                </th>
              ))}
            </tr>
          </thead>
          <tbody>
            {rows.map((row, r) => (
              <tr key={r} className={`h-5 even:bg-[#fafafa] border-b border-[#e8e8e8] ${row.tone === 'purple' ? 'text-[#6a2fd0]' : ''}`}>
                <td className="p-0 border-r border-black"><NameCell row={row} /></td>
                {row.cells.map((c, i) => (
                  <td key={i} className={`p-0 pl-1 leading-[19px] border-r border-[#e8e8e8] ${row.selected ? 'bg-[#8cc1d0]' : ''}`}>
                    {c}
                  </td>
                ))}
                <td className="p-0" />
              </tr>
            ))}
            {[0, 1, 2, 3, 4].map((n) => (
              <tr key={n} className="h-5 even:bg-[#fafafa] border-b border-[#e8e8e8]">
                <td className="p-0 border-r border-black" />
                {columns.slice(2).map((_, i) => (
                  <td key={i} className="p-0 border-r border-[#e8e8e8]" />
                ))}
                <td className="p-0" />
              </tr>
            ))}
          </tbody>
        </table>
      </div>
      <div className="h-1.5 shrink-0 bg-[#dcdcdc] border border-[#a8a8a8]" />
      {['相关性', '细节'].map((s) => (
        <button key={s} className="flex items-center justify-between h-6 shrink-0 border-b-2 border-[#d2d2d2] pt-px pl-[7px] pr-1.5 text-[14px] text-[#00637f]">
          {s}
          <Ico box="0 0 10 10" className="size-2.5"><path d="M1 1l4 7 4-7" stroke="#00637f" strokeWidth="2" /></Ico>
        </button>
      ))}
    </section>
  );
}

/* ---------- view strip ---------- */

const TreeMark = ({ x, y }: { x: number; y: number }) => (
  <g transform={`translate(${x} ${y})`} stroke="#3a3aa8" fill="#f6f08a">
    <path d="M3.500 6v19M3.500 12h6M3.500 20h6" fill="none" />
    <path d="M.5 .5h6v6h-6zM8.500 8.500h6v6h-6zM8.500 16.500h6v6h-6z" />
  </g>
);

const Mill = ({ x, y, h }: { x: number; y: number; h: number }) => (
  <g transform={`translate(${x} ${y})`}>
    <path d={`M0 0h8v${h}H0z`} fill="url(#cut)" />
    <path d={`M0 6l8-5M0 11l8-5M0 16l8-5${h > 18 ? 'M0 21l8-5' : ''}`} stroke="#dde4ff" />
  </g>
);

const LevelBoxes = ({ sign }: { sign: '+' | '-' }) => (
  <g>
    <path d="M7.500 6v32M13 6.500h7M13 22.500h7M13 38.500h7" stroke="#5a62b8" />
    {[0, 16, 32].map((y) => (
      <g key={y} transform={`translate(0 ${y})`}>
        <path d="M1.500 .5h12v12h-12z" fill="#eee" stroke="#777" />
        <path d={sign === '+' ? 'M4 6.500h7M7.500 3v7' : 'M4 6.500h7'} stroke="#333" />
      </g>
    ))}
    {[0, 16].map((y) => (
      <path
        key={y}
        transform={`translate(23 ${y})`}
        d={sign === '+' ? 'M0 1c5 0 7 3 6 7l2-1-4 5-3-5h3c0-3-1-4-4-5z' : 'M0 6l5-5v3c5 0 7 3 7 7-2-3-4-4-7-3v2z'}
        fill="#ee7a30"
      />
    ))}
    <Mill x={25} y={30} h={17} />
    <path d="M34 34h12l-6 3M32 40h10l-8 5" stroke="#777" strokeWidth="1.300" />
  </g>
);

const viewButtons: ReactNode[] = [
  <g>
    <path d="M1 1h16l5-1c2 4 0 8-3 9v12H1z" fill="url(#panel)" stroke="#3552b0" />
    <path d="M15 12c4 2 10 2 15 1v20c-5 2-12 1-15-1z" fill="#e5eafa" stroke="#3552b0" />
    <path d="M15 12c0-5 8-4 7-12" fill="none" stroke="#3552b0" />
    <path d="M4 6h2M8 6h2M4 10h2M8 10h2M4 14h2M8 14h2M18 18h3M23 17h4M18 22h3M23 21h4M18 27h3M23 26h4" stroke="#445" strokeWidth="1.500" />
    <TreeMark x={31} y={22} />
  </g>,
  <g>
    <path d="M14 0h13v23H14z" fill="url(#steel)" />
    <path d="M1 19h9v8l4 2c2 6 0 11-4 15-6 1-9-1-9-5 0-3 2-4 2-8l-2-3z" fill="url(#cut)" />
    <path d="M14 27c-8 3-11 9-9 16M2 38c2-4 5-7 8-9" stroke="#e6ecff" strokeWidth="2" />
    <path d="M11 16l4-3h8l-1 9-4 3h-7z" fill="#f8c468" stroke="#c07a1a" />
    <circle cx="17" cy="19" r="1.500" fill="#222" />
    <TreeMark x={30} y={19} />
  </g>,
  <g>
    <path d="M2 6l13-6 16 4-12 7z" fill="#dbe9fa" stroke="#6c7cc0" />
    <path d="M2 6l17 5v16L2 23z" fill="#bcd0f2" stroke="#6c7cc0" />
    <path d="M31 4v16l-12 7V11z" fill="#7d8fee" stroke="#6c7cc0" />
    <path d="M5 14l7-2c5 1 4 8 1 9l-7 2z" fill="#f9e33a" stroke="#d8332a" />
    <circle cx="6" cy="19" r="5" fill="#fbd83a" stroke="#d8332a" />
    <TreeMark x={31} y={21} />
  </g>,
  <g stroke="#35709c">
    <path d="M.5 3c5 7 15 7 20 0 5 7 15 7 20 0v12H.5z" fill="url(#panel)" />
    <path d="M.5 18c2 9 5 9 7 1 2 8 5 8 7 0 2 8 5 8 7 0 2 8 5 8 7-1v13H.5z" fill="url(#panel)" />
    <TreeMark x={31} y={22} />
  </g>,
  <g>
    <path d="M2 32c8-8 16-12 24-11 6 3 11 5 18 7-7 9-14 15-22 16-6-6-13-9-20-12z" fill="url(#blue)" stroke="#4a6ab8" />
    <path d="M8 36c4-8 10-13 18-15l2 1c-8 3-12 8-15 15z" fill="#e0492a" />
    <Mill x={21} y={5} h={23} />
    <path d="M0 11l5-1 3 5C11 8 15 3 20 0v4C15 8 12 13 9 20z" fill="#3fd05a" stroke="#1d9a38" />
  </g>,
  <LevelBoxes sign="+" />,
  <LevelBoxes sign="-" />,
];

function ViewStrip() {
  return (
    <aside className="w-[58px] shrink-0 flex flex-col items-center bg-white pt-[7px]">
      {viewButtons.map((icon, i) => (
        <button key={i} className={`w-[54px] h-[57px] grid place-items-center ${i === 0 ? 'bg-[#cde6ec] border border-[#a5d3de]' : ''}`}>
          <Ico box="0 0 48 48" className="size-12">{icon}</Ico>
        </button>
      ))}
      <span className="w-[50px] h-px bg-[#ccc]" />
      <Ico box="0 0 4 8" className="w-1 h-2 mt-auto mb-1 mr-10"><path d="M4 0v8L0 4z" fill="#222" /></Ico>
    </aside>
  );
}

/* ---------- graphics window ---------- */

const M = 'text-[#f000f0]';
const G = 'text-[#009682]';
const R = 'text-[#fa0000]';

const info: [string, string, string][] = [
  ['燕秀软件', '免费使用', M],
  ['「设置」', '', M],
  ['程序组', 'NC_PROGRAM', G],
  ['刀路名称', 'D10面铣_COPY', G],
  ['刀路坐标', 'MCS_MILL10', G],
  ['几何体层', '', M],
  ['刀具名称', 'D10精刀', R],
  ['真实刀名', 'D10', R],
  ['刀具编号', 'T10', R],
  ['刀具直径', '10', R],
  ['刀具圆角', '0', G],
  ['刀具类型', '平底刀', G],
  ['刀具补正', '', R],
  ['进退刀', '螺旋,圆弧', G],
  ['-Z取坐标', '', R],
  ['-Z取模型', '', R],
  ['最短刀长', '', R],
  ['刀头名称', '', G],
  ['内公差', '0.003', G],
  ['外公差', '0.003', G],
  ['侧面余量', '0.1', G],
  ['底面余量', '0', G],
  ['转速', '2700', G],
  ['进给', '500', G],
  ['行距', '50%', G],
  ['下刀量', '', R],
  ['加工时间', '00:00:00', G],
];

function Scene() {
  return (
    <svg className="absolute inset-0 w-full h-full font-['Liberation_Sans',sans-serif]" fill="none">
      {/* cursor crosshair */}
      <path d="M308.500 0V268M308.500 333V1200" stroke="#fff" />
      <path d="M0 301.500h276M340 301.500h4000" stroke="#fff" />

      <g transform="translate(300 281) scale(.33333)">
        {/* part */}
        <path d="M170 128H996V951H170z" fill="#fff" />
        <path d="M352 278H862L804 308H368z" fill="#666" stroke="#222" strokeWidth="3" />
        <path d="M862 278V951H808L803 308z" fill="#bdbdbd" />
        <path d="M803 308V530L806 893" stroke="#222" strokeWidth="3" />
        <path d="M352 278L368 308V951H352z" fill="#bdbdbd" />
        <path d="M368 308V951M862 278V320M352 278V320" stroke="#222" strokeWidth="3" />
        <path d="M368 952H862" stroke="#444" strokeWidth="3" />

        {/* tool path */}
        <g stroke="#00ffff" strokeWidth="9">
          <path d="M128 86H1037V994H827V795L823 430L820 320H395V994H128z" />
          <path d="M170 440V952H353V320C356 295 370 279 395 278H820C845 280 860 296 862 320L865 520L869 952H995V128H480" />
          <path d="M311 320C316 270 340 244 385 239H830C880 246 903 275 905 320V600L908 913H953V170H212V913H311V320" />
          <path d="M269 316C275 265 300 235 335 212H251V871H269V320" />
          <path d="M880 212H913V236L880 212" strokeWidth="7" />
        </g>
        <path d="M860 246L880 209M130 541H251" stroke="#00ff00" strokeWidth="8" />
        <path d="M84 499H212C236 503 248 515 250 540" stroke="#f8cfe4" strokeWidth="8" />
        <path d="M88 580C112 578 125 565 128 544" stroke="#ffc800" strokeWidth="8" />

        {/* work and machine axes */}
        <path d="M248 134L290 120H310V134zM420 118L450 127L420 137z" fill="#2f8a38" />
        <path d="M172 123L484 128L172 133z" fill="#9fc79f" />
        <path d="M162 215H176V268H162zM160 378H180L170 420z" fill="#b02a2a" />
        <path d="M165 128H175L173 440H168z" fill="#e09090" />
        <path d="M160 118H178V136H160z" fill="#0a3cf0" />
      </g>
      <g fontSize="13">
        <text x="399" y="319" fill="#3a9a3a">YC</text>
        <text x="445" y="319" fill="#3a9a3a">YM</text>
        <text x="361" y="391" fill="#d05050">XC</text>
        <text x="361" y="439" fill="#d05050">XM</text>
        <text x="356" y="323" fill="#0a3cf0" fontSize="11">ZM</text>
      </g>

      {/* view triad */}
      <g>
        <path d="M64 733h26v25H64z" fill="#a5a5a5" stroke="#b8c0b8" />
        <path d="M66 732h40" stroke="#2fae38" strokeWidth="2" />
        <path d="M96 728l13 4-13 3z" fill="#2f9a38" />
        <path d="M63.500 736v40" stroke="#c83030" strokeWidth="2" />
        <path d="M60 766h7l-3 9z" fill="#d03030" />
        <circle cx="63.500" cy="732" r="4.500" fill="#fff" />
        <path d="M61 728h6v8h-6z" fill="#0a3cf0" />
        <text x="109" y="737" fontSize="12" fill="#2f9a38">Y</text>
        <text x="60" y="785" fontSize="12" fill="#c83030">X</text>
      </g>
    </svg>
  );
}

function GraphicsWindow() {
  return (
    <section className="flex-1 min-w-0 flex flex-col bg-white pr-0.5">
      <div className="flex h-[23px] shrink-0 border-b-2 border-[#539eb7]">
        <div className="flex items-center bg-[#539eb7] text-white text-[12px] px-1">
          <Ico box="0 0 18 16" className="w-[18px] h-4 mr-0.5">
            <path d="M3 0h5v11H3z" fill="url(#cut)" />
            <path d="M10 3h7l-5 3M9 8h6l-5 3" stroke="#445" />
            <path d="M2 13l3-1 3 2" stroke="#f5d020" strokeWidth="2" />
          </Ico>
          顺序铣.prt
          <Ico box="0 0 12 12" className="size-3 ml-1.5">
            <path d="M7 1.500H2v9h6V8M7 1.500l3 3-3 3V1.500" stroke="#fff" strokeWidth="1.500" />
          </Ico>
          <button aria-label="关闭" className="ml-1.5">
            <Ico box="0 0 10 10" className="size-2.5"><path d="M1 1l8 8M9 1 1 9" stroke="#fff" strokeWidth="2" /></Ico>
          </button>
        </div>
      </div>
      <div className="relative flex-1 min-h-0 bg-[#232429] overflow-hidden">
        <dl className="flex flex-col pt-px pl-1 text-[15px] leading-[21px] whitespace-nowrap">
          {info.map(([label, value, tone], i) => (
            <div key={i} className={`flex h-[21px] gap-2.5 ${tone}`}>
              <dt className={`w-20 shrink-0 text-[16px] ${i === 1 ? 'pl-6' : 'text-right'}`}>
                {label}
                {i !== 1 && <span className="font-['Noto_Sans_CJK_TC',sans-serif]">：</span>}
              </dt>
              <dd>{value}</dd>
            </div>
          ))}
        </dl>
        <Scene />
      </div>
    </section>
  );
}

/* ---------- windows taskbar ---------- */

const taskIcons: { icon: ReactNode; name: string }[] = [
  {
    name: '文件资源管理器',
    icon: (
      <g>
        <path d="M1 3h8l2 2h12v16H1z" fill="#f2b632" />
        <path d="M1 8h22v13H1z" fill="#fbd669" />
        <path d="M5 14h14v7h-4v-3H9v3H5z" fill="#3a8fe0" />
      </g>
    ),
  },
  {
    name: 'Edge',
    icon: (
      <g>
        <circle cx="12" cy="12" r="11.500" fill="#1b6fc8" />
        <path d="M1 10C3 3 9 0 14 1c7 1 10 6 9.500 11-.5 4-5 5-8 4 2-3 0-8-5-8-4 0-8 1-9.500 2z" fill="#35c8b0" />
        <path d="M15 1c6 2 9 6 8.500 11-.5 4-5 5-8 4 2-3 1-6-1-8 3-1 3-4 .5-7z" fill="#5fdc6a" />
        <path d="M8 9c-4 4-1 13 7 13 3 0 5-1 7-4-4 1-9 1-10-4-.5-2 1-3 2-4-2-2-4-2-6-1z" fill="#14488c" />
      </g>
    ),
  },
  {
    name: 'QQ',
    icon: (
      <g>
        <rect width="24" height="24" rx="4" fill="#fff" />
        <ellipse cx="12" cy="13" rx="6.500" ry="8" fill="#111" />
        <circle cx="12" cy="7.500" r="5" fill="#111" />
        <ellipse cx="12" cy="16" rx="4.500" ry="5" fill="#fff" />
        <path d="M6 11c4 2 8 2 12 0v2.500c-4 2-8 2-12 0z" fill="#e02020" />
        <path d="M9 9c2-1 4-1 6 0-2 2-4 2-6 0zM6 21h5v1.500H6zM13 21h5v1.500h-5z" fill="#f5a81c" />
        <circle cx="10.300" cy="6" r="1.200" fill="#fff" />
        <circle cx="13.700" cy="6" r="1.200" fill="#fff" />
      </g>
    ),
  },
  {
    name: '记事本',
    icon: (
      <g>
        <path d="M7 3l12-1-3 18-14-1z" fill="#8ccfda" stroke="#5e98a8" />
        <path d="M19 2l3 1-4 19-14-2 12 0z" fill="#dfe8ea" />
        <path d="M7 3l12-1-1 4L6 7z" fill="#d5eef2" />
      </g>
    ),
  },
  {
    name: 'NX',
    icon: (
      <g>
        <circle cx="12" cy="13" r="9" fill="#2b9fe0" />
        <path d="M5 10c4-4 8 2 5 5s3 5 0 7c-5-2-8-6-5-12z" fill="#4fd0a0" />
        <path d="M3 20C12 22 21 14 20 6c6 6-3 19-17 14z" fill="#f2b02a" />
        <path d="M3 1l11-1-4 12z" fill="#d82030" />
        <path d="M3 1l7 4v7z" fill="#901020" />
      </g>
    ),
  },
];

const Dolphins = () => (
  <Ico box="0 0 80 38" className="w-20 h-[38px] ml-auto">
    <path d="M0 38c4-14 22-16 34-9 14 5 30 1 46-5v14z" fill="#3fb6d8" />
    <path d="M0 38c8-10 24-8 32-2 16-2 30-3 48-6v8z" fill="#1d8fc0" />
    <path d="M10 29c0-14 4-24 15-27l2-2 2 3c8 2 13 5 14 11l-8-3c-5 0-8 2-12 6-5 3-8 7-11 12z" fill="#7d93bd" />
    <path d="M14 26c3-8 8-14 16-15l-7 7c-4 2-6 5-9 8z" fill="#dfe7f5" />
    <path d="M28 27c12-7 24-2 33 0 5-3 7-8 7-13-4-2-8-3-9-8 5-1 9 1 11 4 2-4 5-6 9-5 0 5-3 9-8 10 1 10-3 18-12 20-12 2-26-1-31-8z" fill="#46527f" />
    <path d="M38 32c7 3 17 4 24 1-6 5-20 5-24-1z" fill="#c9d3e8" />
    <path d="M6 38c0-5 4-7 6-3 4-5 7-1 8 3z" fill="#e8fbff" />
  </Ico>
);

function Taskbar() {
  return (
    <footer className="relative flex h-10 shrink-0 text-white whitespace-nowrap bg-gradient-to-r from-[#22333b] via-[#2b2d2f] to-[#182b33]">
      <button className="w-12 grid place-items-center" aria-label="开始">
        <Ico box="0 0 16 16" className="size-4">
          <path d="M0 2.200l6.500-.9v6.200H0zM7.300 1.200 16 0v7.500H7.300zM0 8.300h6.500v6.200L0 13.600zM7.300 8.300H16V16l-8.700-1.200z" fill="#fff" />
        </Ico>
      </button>
      <div className="relative flex items-end w-72 bg-[#f2f2f2] border-t border-l border-[#c4c4c4]">
        <Ico box="0 0 18 18" className="size-[18px] absolute left-2.5 top-2.5">
          <circle cx="11" cy="7" r="5.500" stroke="#222" strokeWidth="1.300" />
          <path d="M7 11l-6 6" stroke="#222" strokeWidth="1.300" />
        </Ico>
        <input aria-label="搜索" placeholder="搜索" className="absolute inset-0 w-full bg-transparent pl-[38px] text-[14px] placeholder:text-[#333]" />
        <Dolphins />
      </div>
      <button className="w-[50px] grid place-items-center" aria-label="任务视图">
        <Ico box="0 0 16 16" className="size-4">
          <path d="M1.500 0v3h8V0M1.500 16v-3h8v3M1.500 5.500h8v5h-8zM13.500 0v16M12.500 4.500h3v3h-3z" stroke="#fff" />
        </Ico>
      </button>
      {taskIcons.map((item) => (
        <button key={item.name} aria-label={item.name} className={`relative w-[49px] grid place-items-center ${item.name === 'NX' ? 'bg-[#59636a]' : ''}`}>
          <Ico className="size-6">{item.icon}</Ico>
          <span className={`absolute bottom-0 h-0.5 bg-[#76b9ed] ${item.name === 'NX' ? 'inset-x-0' : 'inset-x-1'}`} />
        </button>
      ))}
      <div className="ml-auto flex items-center pr-1.5 relative">
        <Ico box="0 0 26 24" className="w-[26px] h-6">
          <path d="M10 1c1 6-2 10-8 11 4 4 14 3 16-4-4 0-7-3-8-7z" fill="#f8b53a" />
          <path d="M3 23c-4-1-4-7 1-8 2-5 9-6 12-1 5-2 9 1 9 5 0 3-3 4-5 4z" fill="#b5cdf5" />
          <circle cx="19" cy="6" r="6" fill="#c42b1c" />
          <path d="M18 4l1.500-1v6" stroke="#fff" />
        </Ico>
        <span className="ml-1.5 text-[15px]">26°C</span>
        <span className="ml-1.5 text-[14px]">多云</span>
        <Ico box="0 0 12 8" className="w-3 h-2 ml-6"><path d="M1 7l5-5 5 5" stroke="#fff" strokeWidth="1.300" /></Ico>
        <Ico box="0 0 18 14" className="w-[18px] h-3.5 ml-2.5">
          <path d="M4.500 1.500h13v8h-13M8 12.500h6M1.500 1.500h3v4h-3zM3 5v8h3" stroke="#fff" />
        </Ico>
        <Ico box="0 0 18 16" className="w-[18px] h-4 ml-1.5">
          <path d="M1 5.500h3l4-4v13l-4-4H1z" stroke="#fff" />
          <path d="M10.500 5.500c1.500 1.500 1.500 4 0 5M13 3.500c3 2.500 3 6.500 0 9M15.500 2c3 3.500 3 8.500 0 12" stroke="#aaa" />
        </Ico>
        <span className="ml-1.5 text-[15px]">中</span>
        <div className="ml-2 w-[64px] text-center text-[12px] leading-[19px]">
          <div>22:45</div>
          <div>2025/7/23</div>
        </div>
        <div className="relative ml-4 mr-[18px]">
          <Ico box="0 0 18 18" className="size-[18px]">
            <path d="M1 1h16v12h-6l-4 4v-4H1z" fill="#fff" />
            <path d="M4 4.500h10M4 7.500h10M4 10.500h7" stroke="#22333b" />
          </Ico>
          <span className="absolute left-2 top-2 size-4 rounded-full bg-[#444] border border-[#999] text-[10px] leading-[14px] text-center">3</span>
        </div>
        <span className="absolute right-1 inset-y-0 w-px bg-[#6a7378]" />
      </div>
      <span className="absolute right-1.5 bottom-1 text-[14px] leading-[18px] text-[#c8ccce] opacity-90 font-['Liberation_Mono','Noto_Sans_CJK_SC',monospace]">
        UG爱好者论坛-WWW.UGSNX.COM
      </span>
    </footer>
  );
}

export default function App() {
  return (
    <div className={`flex flex-col h-screen overflow-hidden bg-white text-[#1a1a1a] ${FONT}`}>
      <Gradients />
      <TitleBar />
      <TabStrip />
      <Ribbon />
      <Toolbar />
      <main className="flex flex-1 min-h-0 border-t border-[#8a929a]">
        <ResourceBar />
        <Navigator />
        <ViewStrip />
        <GraphicsWindow />
      </main>
      <div className="flex items-center h-[23px] pb-0.5 shrink-0 border-t-2 border-[#a8a8a8] text-[11px] relative">
        <span className="flex-1 text-center pr-14 font-semibold">全部 1</span>
        <FullScreenIcon className="size-4 absolute right-[55px]" />
      </div>
      <Taskbar />
    </div>
  );
}
